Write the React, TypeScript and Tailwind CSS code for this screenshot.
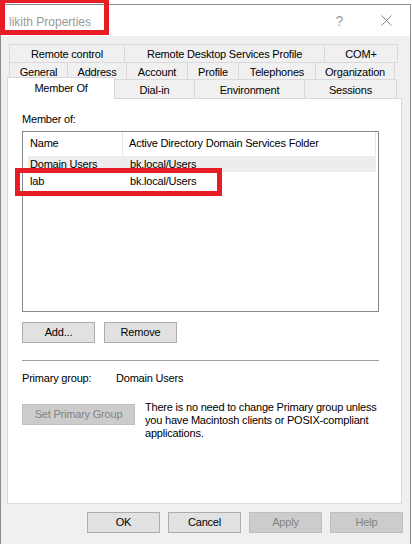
import React from 'react'

type Tab = { label: string; w: number }

const ROW1: Tab[] = [
  { label: 'Remote control', w: 116 },
  { label: 'Remote Desktop Services Profile', w: 201 },
  { label: 'COM+', w: 74 },
]

const ROW2: Tab[] = [
  { label: 'General', w: 59 },
  { label: 'Address', w: 60 },
  { label: 'Account', w: 62 },
  { label: 'Profile', w: 52 },
  { label: 'Telephones', w: 78 },
  { label: 'Organization', w: 80 },
]

const ROW3: Tab[] = [
  { label: 'Dial-in', w: 81 },
  { label: 'Environment', w: 111 },
  { label: 'Sessions', w: 93 },
]

const GROUPS = [
  { name: 'Domain Users', folder: 'bk.local/Users' },
  { name: 'lab', folder: 'bk.local/Users' },
]

function TabRow({ tabs, h }: { tabs: Tab[]; h: number }) {
  return (
    <div className="flex">
      {tabs.map(t => (
        <div
          key={t.label}
          style={{ width: t.w, height: h }}
          className="flex items-center justify-center pt-[2px] border border-[#d9d9d9] -ml-px first:ml-0 -mt-px bg-[#f0f0f0] text-black"
        >
          {t.label}
        </div>
      ))}
    </div>
  )
}

function Button({ label, disabled, w = 73 }: { label: string; disabled?: boolean; w?: number }) {
  return (
    <div
      style={{ width: w }}
      className={`h-[21px] flex items-center justify-center border ${
        disabled ? 'bg-[#cccccc] border-[#bfbfbf] text-[#838383]' : 'bg-[#e1e1e1] border-[#adadad] text-black'
      }`}
    >
      {label}
    </div>
  )
}

export default function App() {
  return (
    <div className="relative w-[412px] h-[544px] overflow-hidden bg-white pt-[4px] text-[11px] leading-none tracking-[-0.2px] font-['Liberation_Sans',Arial,sans-serif]">
      {/* dialog window */}
      <div className="w-[411px] h-[560px] border border-[#8c8c8c] bg-[#f0f0f0]">
        <div className="h-[31px] bg-white flex items-center pl-[8px] pr-[16px]">
          <span className="text-[12px] tracking-normal text-[#999999] mt-[2px]">likith Properties</span>
          <span className="ml-auto text-[14px] text-[#a0a0a0] mr-[38px]">?</span>
          <svg width="11" height="11" viewBox="0 0 11 11" className="mr-[2px]">
            <path d="M0.5 0.5 L10.5 10.5 M10.5 0.5 L0.5 10.5" stroke="#8a8a8a" strokeWidth="1" />
          </svg>
        </div>

        <div className="pt-[9px]">
          {/* tab strip */}
          <div className="pl-[8px]">
            <TabRow tabs={ROW1} h={19} />
            <TabRow tabs={ROW2} h={18} />
            <div className="flex items-end">
              <div className="w-[108px] h-[22px] -ml-[2px] -mt-[3px] bg-white border border-b-0 border-[#d9d9d9] flex items-start justify-center pt-[5px] relative z-10 text-black">
                Member Of
              </div>
              <div className="-ml-px">
                <TabRow tabs={ROW3} h={20} />
              </div>
            </div>
          </div>

          {/* page body */}
          <div className="ml-[6px] w-[395px] h-[406px] -mt-px bg-white border border-[#d9d9d9] px-[14px] pt-[15px] text-black">
            <div>Member of:</div>

            <div className="mt-[6px] w-[357px] h-[181px] border border-[#828790] bg-white">
              <div className="flex h-[23px] items-center">
                <div className="w-[100px] h-full flex items-center pl-[7px] border-r border-[#e5e5e5]">Name</div>
                <div className="w-[253px] h-full flex items-center pl-[6px] border-r border-[#e5e5e5]">
                  Active Directory Domain Services Folder
                </div>
              </div>
              {GROUPS.map((g, i) => (
                <div key={g.name} className="flex h-[17px] items-center ml-[5px] mr-[2px] pt-[1px]">
                  <div className={`flex w-full h-full items-center ${i === 0 ? 'bg-[#ededed]' : ''}`}>
                    <div className="w-[102px] pl-[2px]">{g.name}</div>
                    <div>{g.folder}</div>
                  </div>
                </div>
              ))}
            </div>

            <div className="mt-[10px] flex gap-[9px]">
              <Button label="Add..." />
              <Button label="Remove" />
            </div>

            <div className="mt-[17px] w-[357px] h-px bg-[#a0a0a0]" />

            <div className="mt-[12px] flex">
              <div className="w-[94px]">Primary group:</div>
              <div>Domain Users</div>
            </div>

            <div className="mt-[20px] flex items-start">
              <Button label="Set Primary Group" disabled w={113} />
              <div className="ml-[10px] leading-[13px] -mt-[3px]">
                There is no need to change Primary group unless
                <br />
                you have Macintosh clients or POSIX-compliant
                <br />
                applications.
              </div>
            </div>
          </div>

          {/* dialog buttons */}
          <div className="flex gap-[8px] pl-[86px] mt-[8px]">
            <Button label="OK" />
            <Button label="Cancel" />
            <Button label="Apply" disabled />
            <Button label="Help" disabled />
          </div>
        </div>
      </div>

      {/* red highlight marks */}
      <div className="absolute left-0 top-[-2px] w-[109px] h-[37px] border-[5px] border-[#e81c24]" />
      <div className="absolute left-[15px] top-[168px] w-[207px] h-[28px] border-[5px] border-[#e81c24]" />
    </div>
  )
}
